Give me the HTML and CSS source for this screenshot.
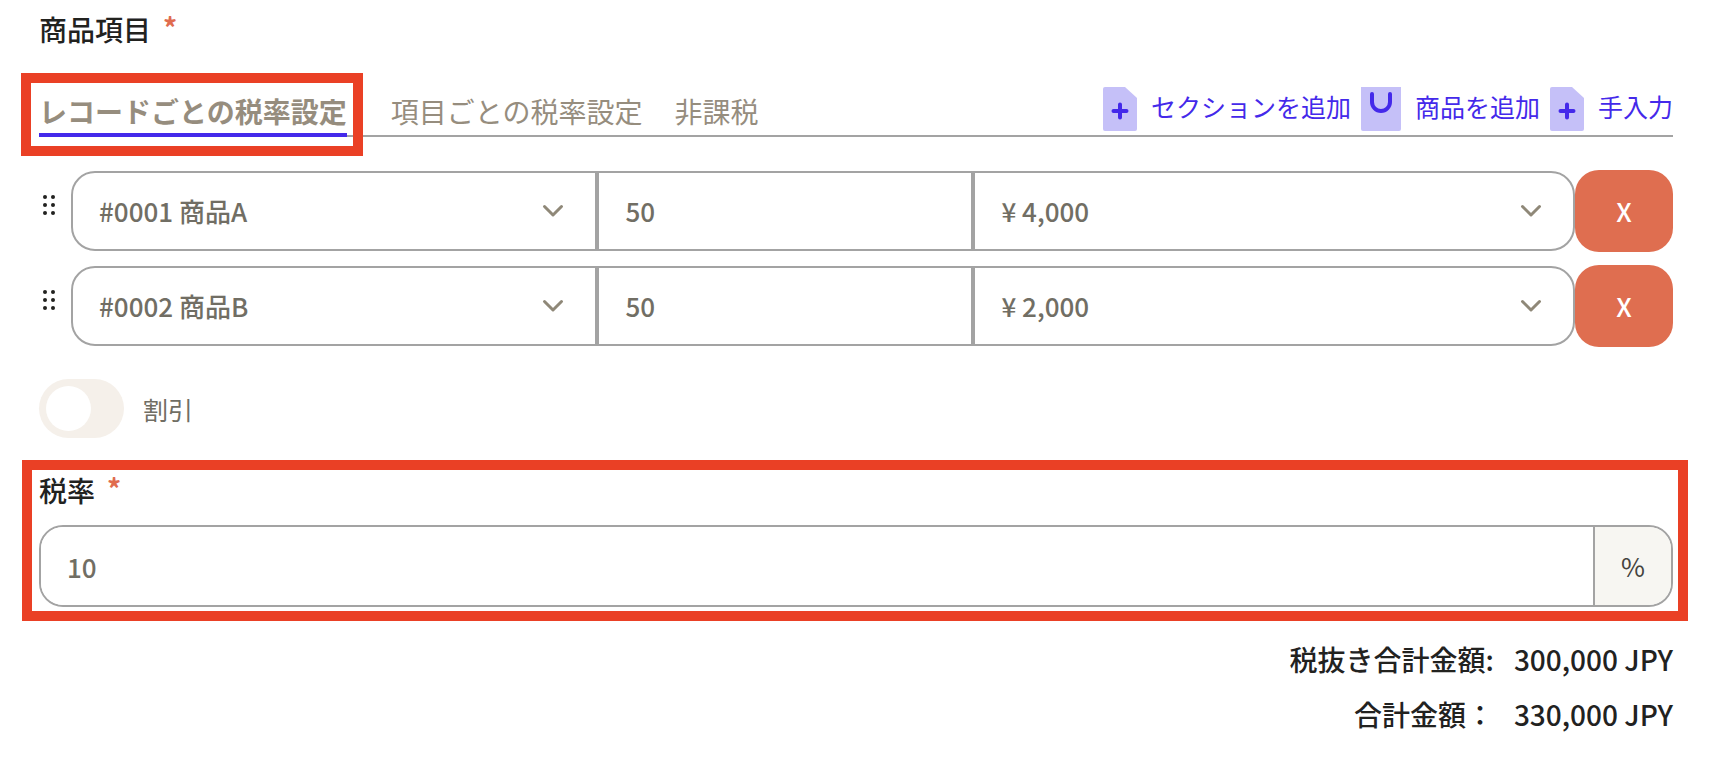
FILE: index.html
```html
<!DOCTYPE html>
<html lang="ja">
<head>
    <meta charset="UTF-8">
    <title>商品項目</title>
    <link rel="stylesheet" href="styles.css">
</head>
<body>
    <form class="items">
        <h2 class="label">商品項目<span class="required">*</span></h2>
        <div class="head">
            <div class="tabs">
                <button type="button" class="tab active">レコードごとの税率設定</button>
                <button type="button" class="tab">項目ごとの税率設定</button>
                <button type="button" class="tab">非課税</button>
            </div>
            <div class="actions">
                <button type="button" class="add">
                    <svg width="34" height="44" viewBox="0 0 34 44">
                        <path class="paper" d="M2 0H22L34 11V42Q34 44 32 44H2Q0 44 0 42V2Q0 0 2 0Z"/>
                        <path class="mark" d="M17 17.5V30.5M10.5 24H23.5"/>
                    </svg>
                    <span>セクションを追加</span>
                </button>
                <button type="button" class="add">
                    <svg width="40" height="44" viewBox="0 0 40 44">
                        <path class="paper" d="M0 0H40V42Q40 44 38 44H2Q0 44 0 42Z"/>
                        <path class="mark" d="M11 7V15A9 9 0 0 0 29 15V7"/>
                    </svg>
                    <span>商品を追加</span>
                </button>
                <button type="button" class="add">
                    <svg width="34" height="44" viewBox="0 0 34 44">
                        <path class="paper" d="M2 0H22L34 11V42Q34 44 32 44H2Q0 44 0 42V2Q0 0 2 0Z"/>
                        <path class="mark" d="M17 17.5V30.5M10.5 24H23.5"/>
                    </svg>
                    <span>手入力</span>
                </button>
            </div>
        </div>
        <div class="rows">
            <div class="row">
                <button type="button" class="drag" aria-label="並び替え">
                    <svg width="12" height="20" viewBox="0 0 12 20">
                        <circle cx="2" cy="2" r="2"/><circle cx="10" cy="2" r="2"/>
                        <circle cx="2" cy="10" r="2"/><circle cx="10" cy="10" r="2"/>
                        <circle cx="2" cy="18" r="2"/><circle cx="10" cy="18" r="2"/>
                    </svg>
                </button>
                <div class="fields">
                    <div class="cell">
                        <select class="field" aria-label="商品">
                            <option>#0001 商品A</option>
                            <option>#0002 商品B</option>
                        </select>
                        <svg class="arrow" width="22" height="14" viewBox="0 0 22 14"><path d="M2.5 2.5L11 11L19.5 2.5"/></svg>
                    </div>
                    <div class="cell">
                        <input type="text" class="field" value="50" aria-label="数量">
                    </div>
                    <div class="cell">
                        <select class="field" aria-label="単価">
                            <option>¥ 4,000</option>
                        </select>
                        <svg class="arrow" width="22" height="14" viewBox="0 0 22 14"><path d="M2.5 2.5L11 11L19.5 2.5"/></svg>
                    </div>
                </div>
                <button type="button" class="del">X</button>
            </div>
            <div class="row">
                <button type="button" class="drag" aria-label="並び替え">
                    <svg width="12" height="20" viewBox="0 0 12 20">
                        <circle cx="2" cy="2" r="2"/><circle cx="10" cy="2" r="2"/>
                        <circle cx="2" cy="10" r="2"/><circle cx="10" cy="10" r="2"/>
                        <circle cx="2" cy="18" r="2"/><circle cx="10" cy="18" r="2"/>
                    </svg>
                </button>
                <div class="fields">
                    <div class="cell">
                        <select class="field" aria-label="商品">
                            <option>#0001 商品A</option>
                            <option selected>#0002 商品B</option>
                        </select>
                        <svg class="arrow" width="22" height="14" viewBox="0 0 22 14"><path d="M2.5 2.5L11 11L19.5 2.5"/></svg>
                    </div>
                    <div class="cell">
                        <input type="text" class="field" value="50" aria-label="数量">
                    </div>
                    <div class="cell">
                        <select class="field" aria-label="単価">
                            <option>¥ 2,000</option>
                        </select>
                        <svg class="arrow" width="22" height="14" viewBox="0 0 22 14"><path d="M2.5 2.5L11 11L19.5 2.5"/></svg>
                    </div>
                </div>
                <button type="button" class="del">X</button>
            </div>
        </div>
        <div class="discount">
            <input type="checkbox" id="discount" class="switch">
            <label for="discount">割引</label>
        </div>
        <div class="tax">
            <label class="label" for="tax">税率<span class="required">*</span></label>
            <div class="taxBox">
                <input type="text" id="tax" value="10">
                <span class="unit">%</span>
            </div>
        </div>
        <dl class="total">
            <dt>税抜き合計金額:</dt>
            <dd>300,000 JPY</dd>
            <dt>合計金額：</dt>
            <dd>330,000 JPY</dd>
        </dl>
    </form>
</body>
</html>
```
FILE: styles.css
```css
*{
    margin: 0;
    padding: 0;
    box-sizing: border-box;
}
body{
    background-color: #fff;
    color: #22221f;
    font-family: "Noto Sans CJK JP", sans-serif;
}
button,input,select{
    font-family: inherit;
    outline: none;
}
button{
    border: none;
    background: none;
    cursor: pointer;
}
svg{
    flex-shrink: 0;
}
.items{
    padding: 8px 47px 32px 39px;
}
.label{
    display: flex;
    font-size: 28px;
    font-weight: 500;
    line-height: 42px;
}
.required{
    margin-left: 12px;
    color: #e06c4f;
    font-weight: bold;
    line-height: 38px;
}
/* タブと追加ボタン */
.head{
    display: flex;
    justify-content: space-between;
    margin-top: 37px;
    border-bottom: 2px solid #a3a3a3;
}
.tabs{
    display: flex;
    align-items: flex-end;
    gap: 32px;
    margin-bottom: -2px;
}
.tab{
    font-size: 28px;
    line-height: 44px;
    color: #968d7e;
    white-space: nowrap;
    border-bottom: 4px solid transparent;
}
.tab.active{
    position: relative;
    margin-right: 12px;
    font-weight: bold;
    border-bottom-color: #4429ea;
}
/* 強調用の赤枠 */
.tab.active::after,
.tax::after{
    content: "";
    position: absolute;
    border: 10px solid #ea4025;
    pointer-events: none;
}
.tab.active::after{
    top: -16px;
    right: -16px;
    bottom: -23px;
    left: -18px;
}
.actions{
    display: flex;
    gap: 10px;
    padding-bottom: 4px;
}
.add{
    display: flex;
    align-items: flex-start;
    gap: 14px;
    font-size: 25px;
    line-height: 38px;
    color: #4429ea;
    white-space: nowrap;
}
.paper{
    fill: #c5c0f8;
}
.mark{
    fill: none;
    stroke: #4429ea;
    stroke-width: 4;
    stroke-linecap: round;
}
/* 商品の行 */
.rows{
    display: flex;
    flex-direction: column;
    gap: 13px;
    margin-top: 33px;
}
.row{
    display: flex;
    align-items: center;
}
.drag{
    display: flex;
    width: 32px;
    padding: 0 4px 12px;
}
.drag svg{
    fill: #22221f;
}
.fields{
    flex: 1;
    display: grid;
    grid-template-columns: 35fr 25fr 40fr;
}
.cell{
    position: relative;
}
.field{
    display: block;
    width: 100%;
    height: 80px;
    padding: 0 26px 2px;
    border: 2px solid #a3a3a3;
    background-color: #fff;
    color: #716e64;
    font-size: 26px;
    font-weight: 500;
    appearance: none;
}
.cell:first-child .field{
    border-radius: 24px 0 0 24px;
}
.cell:last-child .field{
    border-radius: 0 24px 24px 0;
}
.arrow{
    position: absolute;
    top: 33px;
    right: 33px;
    fill: none;
    stroke: #8f8878;
    stroke-width: 3;
    stroke-linecap: round;
    stroke-linejoin: round;
    pointer-events: none;
}
.del{
    width: 98px;
    height: 82px;
    padding-bottom: 2px;
    border-radius: 24px;
    background-color: #df6e50;
    color: #fff;
    font-size: 26px;
    font-weight: 500;
}
/* 割引 */
.discount{
    display: flex;
    align-items: center;
    gap: 19px;
    margin-top: 32px;
    color: #716e64;
    font-size: 25px;
}
.switch{
    width: 85px;
    height: 59px;
    padding: 7px;
    border-radius: 30px;
    background-color: #f5f0ea;
    appearance: none;
    cursor: pointer;
}
.switch::before{
    content: "";
    display: block;
    width: 45px;
    height: 45px;
    border-radius: 50%;
    background-color: #fff;
}
.switch:checked{
    background-color: #4429ea;
}
.switch:checked::before{
    margin-left: auto;
}
/* 税率 */
.tax{
    position: relative;
    margin-top: 31px;
}
.tax::after{
    top: -9px;
    right: -15px;
    bottom: -14px;
    left: -17px;
}
.taxBox{
    display: flex;
    height: 82px;
    margin-top: 14px;
    border: 2px solid #a3a3a3;
    border-radius: 24px;
    overflow: hidden;
}
.taxBox input{
    flex: 1;
    min-width: 0;
    padding: 0 26px;
    border: none;
    color: #716e64;
    font-size: 26px;
    font-weight: 500;
}
.unit{
    width: 78px;
    border-left: 2px solid #a3a3a3;
    background-color: #f7f6f2;
    color: #44433f;
    font-size: 26px;
    line-height: 78px;
    text-align: center;
}
/* 合計 */
.total{
    display: grid;
    grid-template-columns: auto auto;
    justify-content: end;
    column-gap: 20px;
    margin-top: 25px;
    font-size: 28px;
    font-weight: 500;
    line-height: 55px;
    text-align: right;
}
```
